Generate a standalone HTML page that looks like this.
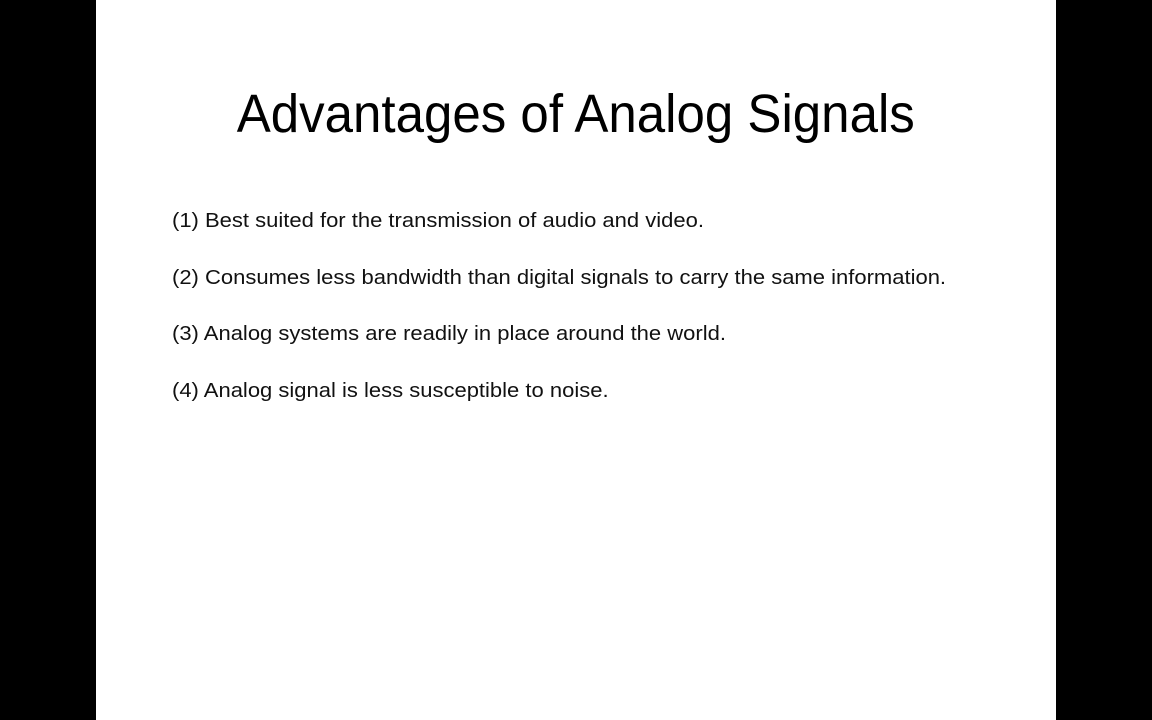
<!DOCTYPE html>
<html><head><meta charset="utf-8"><style>
html,body{margin:0;padding:0;width:1152px;height:720px;background:#000;overflow:hidden}
.slide{position:absolute;left:96px;top:0;width:960px;height:720px;background:#fff}
.title{position:absolute;left:0;width:960px;top:82px;text-align:center;font-family:"Liberation Sans",sans-serif;font-size:54px;line-height:64px;color:#000}
.title span{display:inline-block;transform:scaleX(0.945)}
.item{position:absolute;left:76px;font-family:"Liberation Sans",sans-serif;font-size:20px;line-height:24px;color:#111;white-space:nowrap;transform:scaleX(1.1);transform-origin:0 0}
</style></head><body>
<div class="slide">
<div class="title"><span>Advantages of Analog Signals</span></div>
<div class="item" style="top:209px">(1) Best suited for the transmission of audio and video.</div>
<div class="item" style="top:266px">(2) Consumes less bandwidth than digital signals to carry the same information.</div>
<div class="item" style="top:322px">(3) Analog systems are readily in place around the world.</div>
<div class="item" style="top:379px">(4) Analog signal is less susceptible to noise.</div>
</div>
</body></html>
